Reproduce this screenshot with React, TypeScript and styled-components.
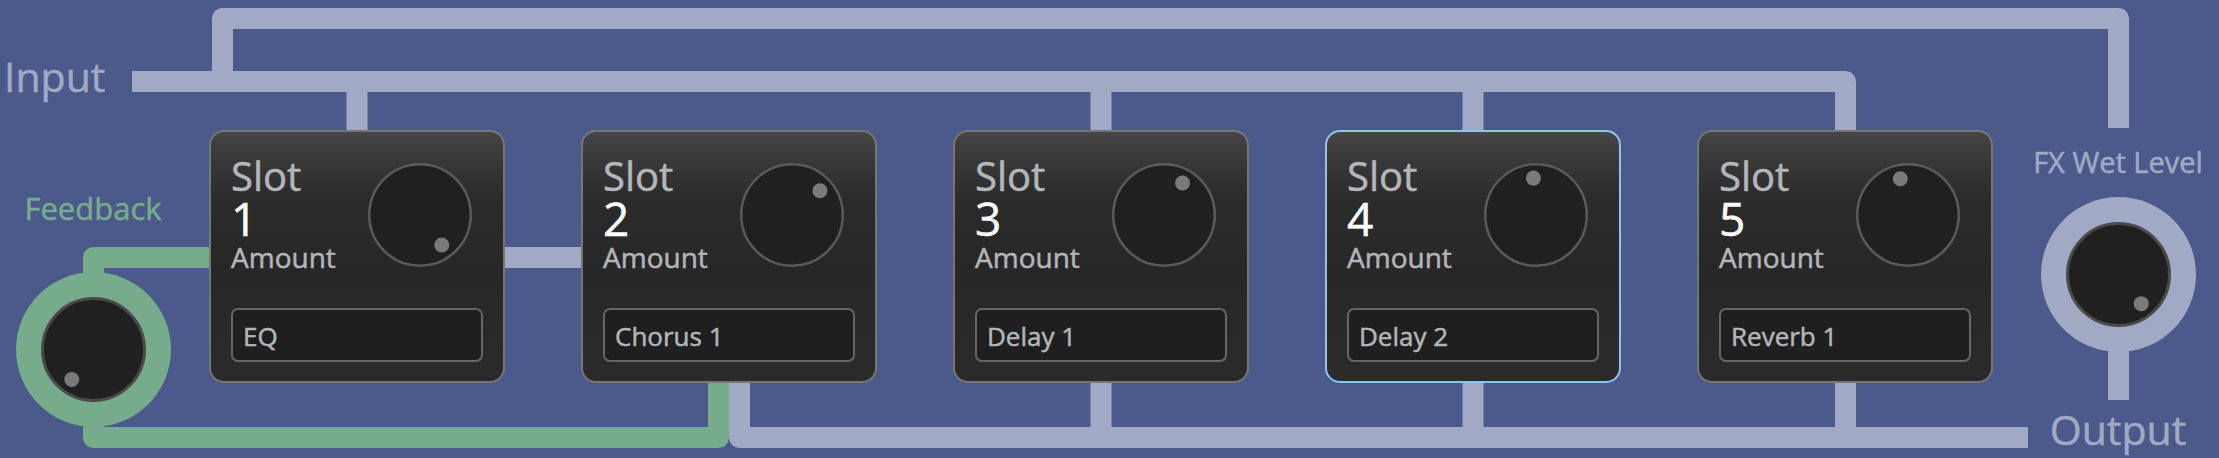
import React from "react";
import styled, { createGlobalStyle } from "styled-components";

const LAV = "#a1a9c4";
const GREEN = "#76ab8c";
const BG = "#4b5a8a";

const slots = [
	{ n: 1, name: "EQ", angle: 144 },
	{ n: 2, name: "Chorus 1", angle: 49 },
	{ n: 3, name: "Delay 1", angle: 30 },
	{ n: 4, name: "Delay 2", angle: -4, active: true },
	{ n: 5, name: "Reverb 1", angle: -12 },
];

const Knob = ({ angle, size = 104, stroke = "#5a5a5a", edge = 2.5 }: { angle: number; size?: number; stroke?: string; edge?: number }) => {
	const c = size / 2;
	const a = (angle * Math.PI) / 180;
	return (
		<svg width={size} height={size} viewBox={`0 0 ${size} ${size}`}>
			<circle cx={c} cy={c} r={c - edge / 2} fill="#202020" stroke={stroke} strokeWidth={edge} />
			<circle cx={c + 37 * Math.sin(a)} cy={c - 37 * Math.cos(a)} r={7.5} fill="#7a7a7a" />
		</svg>
	);
};

// routing wires, drawn behind the nodes
const Wires = () => (
	<WireLayer width="2219" height="458" viewBox="0 0 2219 458">
		<g fill="none" stroke={LAV} strokeWidth="21" strokeLinejoin="round">
			<path d="M222.5 82 V18.5 H2118.5 V128" />
			<path d="M132 81.5 H1845.5 V132" />
			<path d="M357 81.5 V132" />
			<path d="M1101 81.5 V132" />
			<path d="M1473 81.5 V132" />
			<path d="M505 257.5 H583" />
			<path d="M739.5 381 V437.5 H2028" />
			<path d="M1101 381 V437.5" />
			<path d="M1473 381 V437.5" />
			<path d="M1845.5 381 V437.5" />
			<path d="M2118.5 340 V400" />
		</g>
		<g fill="none" stroke={GREEN} strokeWidth="21" strokeLinejoin="round">
			<path d="M211 257.5 H93.5 V285" />
			<path d="M93.5 415 V437.5 H718.5 V381" />
		</g>
	</WireLayer>
);

export default function App() {
	return (
		<>
			<Global />
			<Board>
				<Wires />
				<Layout>
					<LeftCol>
						<IOLabel>Input</IOLabel>
						<FeedbackLabel>Feedback</FeedbackLabel>
						<Ring color={GREEN}>
							<Knob angle={-144} stroke="#4a4a4a" edge={3} size={105} />
						</Ring>
					</LeftCol>
					<Rack>
						{slots.map((s) => (
							<Card key={s.n} active={s.active}>
								<Head>
									<Titles>
										<SlotWord>Slot</SlotWord>
										<SlotNum>{s.n}</SlotNum>
										<Amount>Amount</Amount>
									</Titles>
									<KnobHold>
										<Knob angle={s.angle} />
									</KnobHold>
								</Head>
								<NameBox>{s.name}</NameBox>
							</Card>
						))}
					</Rack>
					<RightCol>
						<WetLabel>FX Wet Level</WetLabel>
						<Ring color={LAV}>
							<Knob angle={142} stroke="#4a4a4a" edge={3} size={105} />
						</Ring>
						<OutLabel>Output</OutLabel>
					</RightCol>
				</Layout>
			</Board>
		</>
	);
}

const Global = createGlobalStyle`
	html, body {
		margin: 0;
		padding: 0;
		background: ${BG};
		overflow: hidden;
	}
	body {
		font-family: "Open Sans", "DejaVu Sans", sans-serif;
		-webkit-text-stroke: 0.5px currentColor;
	}
`;

const Board = styled.div`
	position: relative;
	width: 2219px;
	height: 458px;
	background: ${BG};
	overflow: hidden;
`;

const WireLayer = styled.svg`
	position: absolute;
	top: 0;
	left: 0;
	pointer-events: none;
`;

const Layout = styled.div`
	position: relative;
	display: flex;
	height: 100%;
`;

const LeftCol = styled.div`
	width: 186px;
	display: flex;
	flex-direction: column;
	align-items: center;
`;

const IOLabel = styled.div`
	align-self: flex-start;
	margin: 56px 0 0 4px;
	font-size: 41px;
	line-height: 41px;
	color: ${LAV};
`;

const FeedbackLabel = styled.div`
	margin-top: 96px;
	font-size: 31px;
	line-height: 31px;
	color: ${GREEN};
`;

const Ring = styled.div<{ color: string }>`
	width: 155px;
	height: 155px;
	border-radius: 50%;
	background: ${(p) => p.color};
	display: flex;
	align-items: center;
	justify-content: center;
	margin-top: 48px;

	svg {
		display: block;
	}
`;

const Rack = styled.div`
	display: flex;
	gap: 76px;
	margin-left: 23px;
	padding-top: 130px;
	align-items: flex-start;
`;

const Card = styled.div<{ active?: boolean }>`
	box-sizing: border-box;
	width: 296px;
	height: 253px;
	border: 2px solid ${(p) => (p.active ? "#8cc6ee" : "#767676")};
	border-radius: 15px;
	background: linear-gradient(
		180deg,
		#474747 0%,
		#383838 12%,
		#2c2c2c 26%,
		#272727 55%,
		#2b2b2b 100%
	);
	padding: 24px 20px 19px 20px;
	display: flex;
	flex-direction: column;
`;

const Head = styled.div`
	display: flex;
	justify-content: space-between;
	align-items: flex-start;
`;

const Titles = styled.div`
	display: flex;
	flex-direction: column;
	color: #b3b6ba;
`;

const SlotWord = styled.div`
	font-size: 40px;
	line-height: 40px;
`;

const SlotNum = styled.div`
	font-size: 46px;
	line-height: 44px;
	color: #ffffff;
`;

const Amount = styled.div`
	font-size: 28px;
	line-height: 34px;
`;

const KnobHold = styled.div`
	margin: 7px 11px 0 0;

	svg {
		display: block;
	}
`;

const NameBox = styled.div`
	margin-top: auto;
	box-sizing: border-box;
	height: 54px;
	border: 2px solid #666;
	border-radius: 7px;
	background: #1f1f1f;
	padding: 2px 10px 0;
	display: flex;
	align-items: center;
	font-size: 26px;
	line-height: 26px;
	color: #b3b6ba;
`;

const RightCol = styled.div`
	width: 202px;
	margin-left: 24px;
	display: flex;
	flex-direction: column;
	align-items: center;

	${Ring} {
		margin-top: 21px;
	}
`;

const WetLabel = styled.div`
	margin-top: 147px;
	font-size: 29px;
	line-height: 29px;
	color: ${LAV};
`;

const OutLabel = styled.div`
	margin-top: 57px;
	font-size: 41px;
	line-height: 41px;
	color: ${LAV};
`;
